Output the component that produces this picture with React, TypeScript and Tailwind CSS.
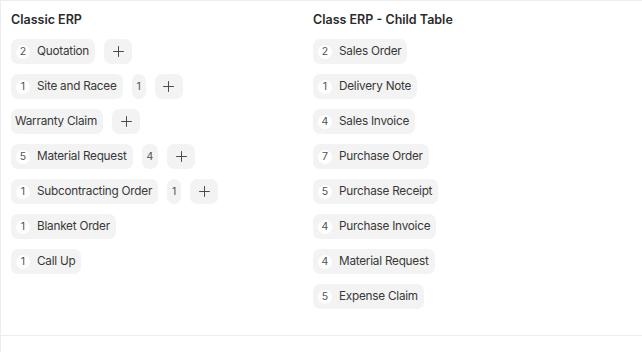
import { Plus } from 'lucide-react'

interface LinkItem {
  label: string
  count?: number
  open?: number
  canAdd?: boolean
}

const classicErp: LinkItem[] = [
  { label: 'Quotation', count: 2, canAdd: true },
  { label: 'Site and Racee', count: 1, open: 1, canAdd: true },
  { label: 'Warranty Claim', canAdd: true },
  { label: 'Material Request', count: 5, open: 4, canAdd: true },
  { label: 'Subcontracting Order', count: 1, open: 1, canAdd: true },
  { label: 'Blanket Order', count: 1 },
  { label: 'Call Up', count: 1 },
]

const childTable: LinkItem[] = [
  { label: 'Sales Order', count: 2 },
  { label: 'Delivery Note', count: 1 },
  { label: 'Sales Invoice', count: 4 },
  { label: 'Purchase Order', count: 7 },
  { label: 'Purchase Receipt', count: 5 },
  { label: 'Purchase Invoice', count: 4 },
  { label: 'Material Request', count: 4 },
  { label: 'Expense Claim', count: 5 },
]

const LinkRow: React.FC<{ item: LinkItem }> = ({ item }) => {
  return (
    <div className="flex h-[25px] items-center gap-[9px]">
      <div
        className={`flex h-[25px] items-center rounded-[7px] bg-[#f3f3f3] pr-[6px] ${
          item.count !== undefined ? 'pl-[5px]' : 'pl-[4px]'
        }`}
      >
        {item.count !== undefined ? (
          <span className="mr-[7px] flex h-[14px] w-[14px] items-center justify-center rounded-full bg-white text-[10.5px] text-[#525252]">
            {item.count}
          </span>
        ) : null}
        <span className="text-[11.75px] tracking-[-0.02em] text-[#383838]">
          {item.label}
        </span>
      </div>
      {item.open !== undefined ? (
        <div className="flex h-[25px] items-center rounded-[7px] bg-[#f3f3f3] px-[5px] text-[10.5px] text-[#525252]">
          {item.open}
        </div>
      ) : null}
      {item.canAdd ? (
        <button
          type="button"
          className="flex h-[25px] w-[28px] items-center justify-center rounded-[7px] bg-[#f3f3f3] text-[#4a4a4a]"
        >
          <Plus size={17} strokeWidth={1.4} />
        </button>
      ) : null}
    </div>
  )
}

const LinkGroup: React.FC<{ title: string; items: LinkItem[] }> = ({
  title,
  items,
}) => {
  return (
    <div className="flex flex-col">
      <h3 className="h-[20px] text-[12.5px] font-semibold leading-[20px] text-[#2b2b2b]">
        {title}
      </h3>
      <div className="mt-[9px] flex flex-col gap-[10px]">
        {items.map((item) => (
          <LinkRow key={item.label} item={item} />
        ))}
      </div>
    </div>
  )
}

const App: React.FC = () => {
  return (
    <div
      className="h-[352px] w-[642px] overflow-hidden border-l border-t border-[#ededed] bg-white"
      style={{ fontFamily: 'Inter, "Noto Sans", sans-serif' }}
    >
      <div className="grid h-[335px] grid-cols-[290px_1fr] gap-x-3 border-b border-[#ededed] pl-[10px] pt-[9px]">
        <LinkGroup title="Classic ERP" items={classicErp} />
        <LinkGroup title="Class ERP - Child Table" items={childTable} />
      </div>
    </div>
  )
}

export default App
